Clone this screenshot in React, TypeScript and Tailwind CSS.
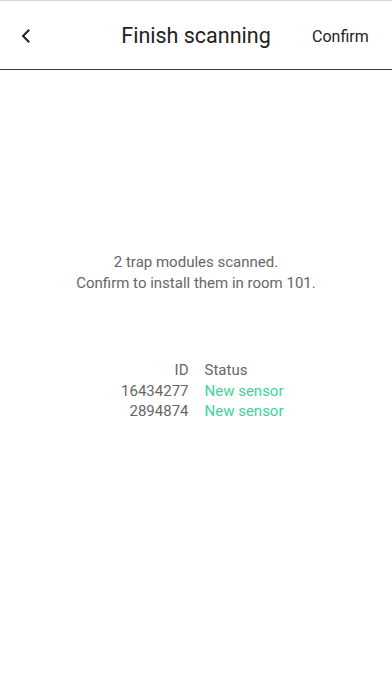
import React from "react";

export default function App() {
  const rows = [
    { id: "16434277", status: "New sensor" },
    { id: "2894874", status: "New sensor" },
  ];
  return (
    <div className="w-[392px] h-[696px] bg-white border-t border-[#d4d4d4] font-['Roboto',sans-serif] flex flex-col">
      <div className="h-[69px] grid grid-cols-[98px_1fr_98px] items-center border-b border-[#3a3a3a]">
        <div className="h-full flex items-center pl-[20px] pt-[2px]">
          <svg width="12" height="14" viewBox="0 0 12 14" fill="none">
            <path d="M8.5 1.5 L3 7 L8.5 12.5" stroke="#222" strokeWidth="2" strokeLinecap="square" />
          </svg>
        </div>
        <div className="text-center text-[21.5px] text-[#222] pt-[2px]">Finish scanning</div>
        <div className="text-[16px] text-[#222] pl-[18px] pt-[4px]">Confirm</div>
      </div>
      <div className="flex flex-col items-center pt-[182px]">
        <div className="text-[15px] leading-[21px] text-[#666] text-center">
          <div>2 trap modules scanned.</div>
          <div>Confirm to install them in room 101.</div>
        </div>
        <div className="mt-[66px] grid grid-cols-[100px_100px] gap-x-[16px] text-[15px] leading-[20.5px] pl-[1px]">
          <div className="text-right text-[#666]">ID</div>
          <div className="text-[#666]">Status</div>
          {rows.map((r) => (
            <React.Fragment key={r.id}>
              <div className="text-right text-[#666]">{r.id}</div>
              <div className="text-[#3dd598]">{r.status}</div>
            </React.Fragment>
          ))}
        </div>
      </div>
    </div>
  );
}
